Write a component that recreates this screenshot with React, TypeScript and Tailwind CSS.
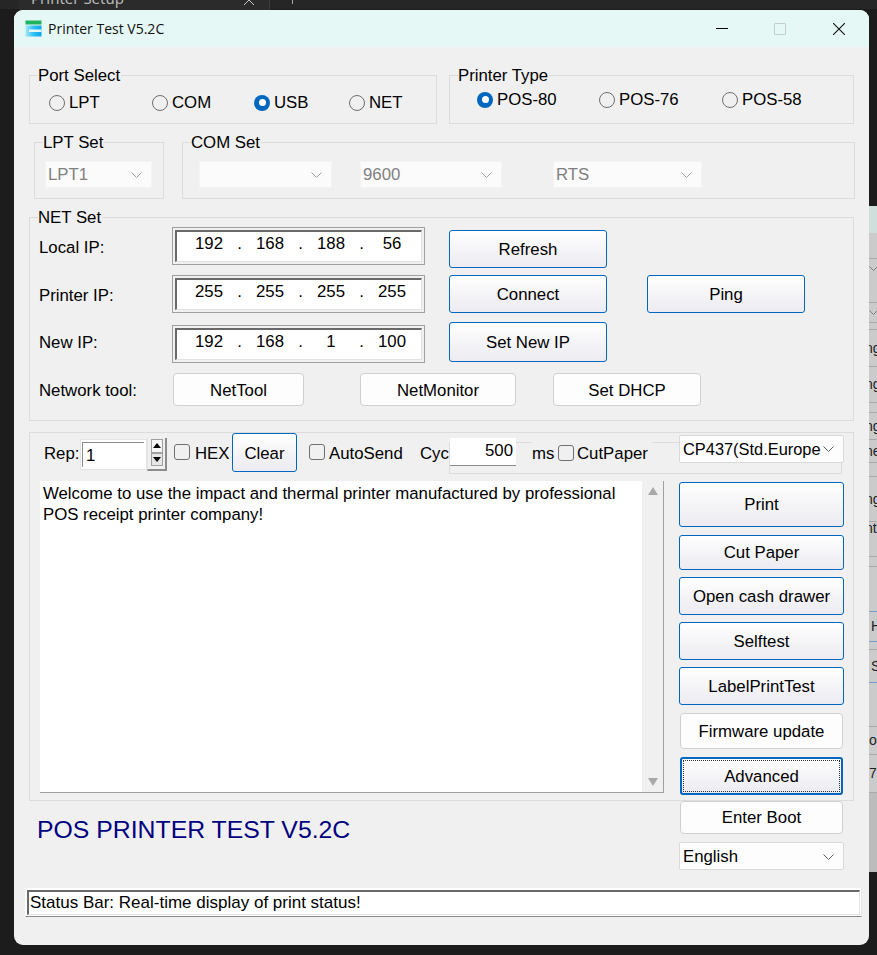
import React from 'react';

const blueBtn =
  'shrink-0 flex items-center justify-center border border-[#0067c0] rounded-[3px] bg-gradient-to-b from-white to-[#ebebf1] text-black';
const plainBtn =
  'shrink-0 flex items-center justify-center border border-[#d0d0d0] rounded-[4px] bg-[#fdfdfd] text-black';

const Chevron = ({ color = '#606060' }: { color?: string }) => (
  <svg width="11" height="6" viewBox="0 0 11 6" fill="none" className="shrink-0">
    <path d="M0.5 0.5 L5.5 5.5 L10.5 0.5" stroke={color} strokeWidth="1" />
  </svg>
);

const Radio = ({ label, checked, className }: { label: string; checked?: boolean; className: string }) => (
  <div className={`flex items-center gap-[4px] shrink-0 ${className}`}>
    {checked ? (
      <span className="w-[16px] h-[16px] rounded-full bg-[#0067c0] flex items-center justify-center">
        <span className="w-[7px] h-[7px] rounded-full bg-white" />
      </span>
    ) : (
      <span className="w-[16px] h-[16px] rounded-full border border-[#6f6f6f]" />
    )}
    <span>{label}</span>
  </div>
);

const Check = ({ className = '' }: { className?: string }) => (
  <span className={`block shrink-0 w-[16px] h-[16px] rounded-[3px] border border-[#6f6f6f] ${className}`} />
);

const Group = ({
  title,
  className,
  children,
}: {
  title: string;
  className: string;
  children?: React.ReactNode;
}) => (
  <div className={`relative shrink-0 border border-[#dcdcdc] ${className}`}>
    <span className="absolute top-[-10px] left-[8px] bg-[#f0f0f0] leading-[20px] pr-[1px]">{title}</span>
    {children}
  </div>
);

const Combo = ({
  value,
  className,
  disabled,
}: {
  value: string;
  className: string;
  disabled?: boolean;
}) => (
  <div
    className={`shrink-0 flex items-center justify-between pr-[9px] ${
      disabled
        ? 'pl-[2px] bg-[#fbfbfb] text-[#808080] border border-[#f4f4f4]'
        : 'pl-[3px] bg-[#fdfdfd] border border-[#d9d9d9] rounded-[2px]'
    } ${className}`}
  >
    <span className="whitespace-nowrap">{value}</span>
    <Chevron color={disabled ? '#a0a0a0' : '#606060'} />
  </div>
);

const IpBox = ({ parts, className = '' }: { parts: string[]; className?: string }) => (
  <div className={`shrink-0 w-[253px] h-[38px] border border-[#a0a0a0] bg-[#f0f0f0] p-[2px] ${className}`}>
    <div className="w-full h-full bg-white border-t-2 border-l-2 border-t-[#696969] border-l-[#696969] border-b border-r border-b-[#e3e3e3] border-r-[#e3e3e3] flex pl-[12px] pt-[2px] leading-[20px]">
      {parts.map((p, i) => (
        <React.Fragment key={i}>
          <span className="w-[40px] text-center">{p}</span>
          {i < 3 && <span className="w-[21px] text-center">.</span>}
        </React.Fragment>
      ))}
    </div>
  </div>
);

// the window that sits behind the dialog, only an 8px strip of it shows
const behindRows: { h: number; text?: string; textCls?: string; line?: string; bg?: string; chevron?: boolean }[] = [
  { h: 27, bg: 'bg-[#cfdfdb]', line: 'border-transparent' },
  { h: 26 },
  { h: 20, chevron: true, line: 'border-transparent' },
  { h: 24 },
  { h: 20, chevron: true },
  { h: 7 },
  { h: 37, text: 'ng', textCls: '-ml-[4px]' },
  { h: 36, text: 'ng', textCls: '-ml-[4px]' },
  { h: 10 },
  { h: 27, text: 'ng', textCls: '-ml-[4px]' },
  { h: 23, text: 'ne', textCls: '-ml-[4px]' },
  { h: 14 },
  { h: 45, text: 'ng', textCls: '-ml-[4px]' },
  { h: 14, text: 'nt', textCls: '-ml-[4px]', line: 'border-transparent' },
  { h: 21 },
  { h: 10 },
  { h: 45, line: 'border-[#7a9cc8]' },
  { h: 30, text: 'H', textCls: 'ml-[2px]', line: 'border-[#7a9cc8]' },
  { h: 8 },
  { h: 33, text: 'S', textCls: 'ml-[2px]', line: 'border-[#7a9cc8]' },
  { h: 44 },
  { h: 28, text: 'or' },
  { h: 38, text: '78' },
  { h: 79, bg: 'bg-[#bcbcbc]', line: 'border-transparent' },
];

export default function App() {
  return (
    <div className="relative w-[877px] h-[955px] overflow-hidden bg-[#1c1c1c] font-['Liberation_Sans',Arial,sans-serif] text-[16.8px] text-black">
      {/* stuff behind the dialog */}
      <div className="absolute left-0 top-0 w-[877px] h-[9px] bg-[#262626]" />
      <div className="absolute left-[19px] top-0 w-[251px] h-[10px] bg-[#2b2b2b] border-r border-[#3c3c3c] overflow-hidden">
        <span className="absolute left-[12px] top-[-13px] text-[#b8b8b8] text-[15px] font-['Noto_Sans',sans-serif] leading-[22px]">
          Printer Setup
        </span>
        <svg width="12" height="6" viewBox="0 0 12 6" className="absolute left-[224px] top-0">
          <path d="M1 -5 L11 5 M11 -5 L1 5" stroke="#c8c8c8" strokeWidth="1" />
        </svg>
      </div>
      <span className="absolute left-[292px] top-0 w-[1px] h-[4px] bg-[#a8a8a8]" />
      <div className="absolute left-[869px] top-[206px] w-[8px] h-[666px] bg-[#cbcbcb] overflow-hidden flex flex-col text-[14px]">
        {behindRows.map((r, i) => (
          <div
            key={i}
            style={{ height: r.h }}
            className={`shrink-0 border-b flex items-center whitespace-nowrap text-[#222] ${r.line ?? 'border-[#a9a9a9]'} ${r.bg ?? ''}`}
          >
            {r.chevron ? (
              <svg width="8" height="5" viewBox="0 0 8 5" fill="none">
                <path d="M0.5 0.5 L4.5 4.5 L8.5 0.5" stroke="#808080" strokeWidth="1" />
              </svg>
            ) : (
              r.text && <span className={`block ${r.textCls ?? ''}`}>{r.text}</span>
            )}
          </div>
        ))}
      </div>

      {/* dialog */}
      <div className="absolute left-[14px] top-[10px] w-[855px] h-[935px] rounded-[9px] overflow-hidden bg-[#f0f0f0] flex flex-col">
        <div className="shrink-0 h-[37px] bg-[#e6f8f6] flex items-center font-['Open_Sans',sans-serif] text-[14px] text-[#111]">
          <svg width="17" height="17" viewBox="0 0 17 17" className="ml-[11px] mt-[-1px] shrink-0">
            <defs>
              <linearGradient id="logoE" x1="0" y1="0" x2="1" y2="0">
                <stop offset="0" stopColor="#a8e8f8" />
                <stop offset="0.5" stopColor="#30c0f2" />
                <stop offset="1" stopColor="#0ca6ee" />
              </linearGradient>
            </defs>
            <rect x="0.5" y="0.5" width="16" height="4" fill="#1fb45c" />
            <rect x="0.5" y="5.5" width="16" height="11" fill="url(#logoE)" />
            <rect x="4" y="9.5" width="12.5" height="2.5" fill="#e6f8f6" />
          </svg>
          <span className="ml-[6px]">Printer Test V5.2C</span>
          <div className="ml-auto flex items-center mr-[24px]">
            <span className="block w-[12px] h-[1px] bg-black" />
            <span className="block ml-[46px] w-[12px] h-[12px] border border-[#c4cfcd] rounded-[1px]" />
            <svg width="12" height="12" viewBox="0 0 12 12" className="ml-[47px]">
              <path d="M0 0 L12 12 M12 0 L0 12" stroke="#111" strokeWidth="1.1" />
            </svg>
          </div>
        </div>

        {/* port + printer type */}
        <div className="flex mt-[28px] ml-[15px] gap-[12px]">
          <Group title="Port Select" className="w-[408px] h-[49px] flex items-center pl-[19px] pt-[6px]">
            <Radio label="LPT" className="w-[103px]" />
            <Radio label="COM" className="w-[102px]" />
            <Radio label="USB" checked className="w-[95px]" />
            <Radio label="NET" className="w-[80px]" />
          </Group>
          <Group title="Printer Type" className="w-[405px] h-[49px] flex items-center pl-[27px]">
            <Radio label="POS-80" checked className="w-[122px]" />
            <Radio label="POS-76" className="w-[123px]" />
            <Radio label="POS-58" className="w-[110px]" />
          </Group>
        </div>

        {/* lpt + com */}
        <div className="flex mt-[18px] ml-[20px] gap-[18px]">
          <Group title="LPT Set" className="w-[130px] h-[57px] pl-[10px] pt-[18px]">
            <Combo value="LPT1" disabled className="w-[107px] h-[27px]" />
          </Group>
          <Group title="COM Set" className="w-[673px] h-[57px] flex pl-[16px] pt-[18px]">
            <Combo value="" disabled className="w-[133px] h-[27px]" />
            <Combo value="9600" disabled className="w-[142px] h-[27px] ml-[28px]" />
            <Combo value="RTS" disabled className="w-[149px] h-[27px] ml-[51px]" />
          </Group>
        </div>

        {/* net */}
        <Group title="NET Set" className="w-[825px] h-[204px] ml-[15px] mt-[18px] pt-[9px] pl-[9px]">
          <div className="flex h-[41px]">
            <span className="w-[133px] h-[38px] flex items-center shrink-0 pt-[4px]">Local IP:</span>
            <IpBox parts={['192', '168', '188', '56']} />
            <button type="button" className={`${blueBtn} w-[158px] h-[38px] ml-[24px] mt-[3px] pt-[2px]`}>
              Refresh
            </button>
          </div>
          <div className="flex mt-[7px] h-[38px]">
            <span className="w-[133px] h-[38px] flex items-center shrink-0 pt-[4px]">Printer IP:</span>
            <IpBox parts={['255', '255', '255', '255']} />
            <button type="button" className={`${blueBtn} w-[158px] h-[38px] ml-[24px] pt-[2px]`}>
              Connect
            </button>
            <button type="button" className={`${blueBtn} w-[158px] h-[38px] ml-[40px] pt-[2px]`}>
              Ping
            </button>
          </div>
          <div className="flex mt-[9px] h-[41px]">
            <span className="w-[133px] h-[38px] mt-[3px] flex items-center shrink-0 pb-[2px]">New IP:</span>
            <IpBox parts={['192', '168', '1', '100']} className="mt-[3px]" />
            <button type="button" className={`${blueBtn} w-[158px] h-[40px] ml-[24px] pt-[2px]`}>
              Set New IP
            </button>
          </div>
          <div className="flex mt-[10px]">
            <span className="w-[134px] h-[33px] flex items-center shrink-0 pt-[2px]">Network tool:</span>
            <button type="button" className={`${plainBtn} w-[131px] h-[33px] pt-[2px]`}>
              NetTool
            </button>
            <button type="button" className={`${plainBtn} w-[156px] h-[33px] ml-[56px] pt-[2px]`}>
              NetMonitor
            </button>
            <button type="button" className={`${plainBtn} w-[148px] h-[33px] ml-[37px] pt-[2px]`}>
              Set DHCP
            </button>
          </div>
        </Group>

        {/* send panel */}
        <div className="shrink-0 w-[825px] h-[369px] ml-[15px] mt-[11px] border border-[#dcdcdc]">
          <div className="relative h-[41px] flex items-start pl-[14px]">
            <div className="absolute left-[419px] top-[9px] w-[393px] h-[32px] border border-[#dcdcdc]" />
            <span className="relative shrink-0 w-[36px] mt-[11px] leading-[20px]">Rep:</span>
            <div className="relative shrink-0 w-[67px] h-[31px] mt-[6px] border border-[#e4e4e4] bg-white p-[2px] pl-[1px]">
              <div className="h-full border-t border-l border-[#8c8c8c] bg-white pl-[3px] leading-[25px]">1</div>
            </div>
            <div className="relative shrink-0 w-[20px] h-[33px] mt-[5px] border-r-2 border-b-2 border-[#8c8c8c] border-l border-l-[#e4e4e4] p-[3px] pr-[2px] pt-[1px] bg-[#f0f0f0] flex flex-col">
              <span className="h-[14px] border border-[#a0a0a0] bg-[#f6f6f6] flex items-center justify-center">
                <svg width="8" height="5" viewBox="0 0 8 5">
                  <path d="M4 0 L8 5 L0 5 Z" fill="#000" />
                </svg>
              </span>
              <span className="h-[14px] border border-[#a0a0a0] bg-[#e6e6e6] flex items-center justify-center">
                <svg width="8" height="5" viewBox="0 0 8 5">
                  <path d="M0 0 L8 0 L4 5 Z" fill="#000" />
                </svg>
              </span>
            </div>
            <Check className="relative ml-[7px] mt-[11px]" />
            <span className="relative shrink-0 ml-[5px] mt-[11px] leading-[20px] w-[37px]">HEX</span>
            <button type="button" className={`${blueBtn} relative w-[65px] h-[39px] pt-[2px]`}>
              Clear
            </button>
            <Check className="relative ml-[12px] mt-[11px]" />
            <span className="relative shrink-0 ml-[4px] mt-[11px] leading-[20px] w-[91px] whitespace-nowrap">AutoSend</span>
            <span className="relative shrink-0 mt-[11px] leading-[20px] w-[30px]">Cyc</span>
            <div className="relative shrink-0 w-[66px] h-[28px] mt-[5px] bg-white border-b border-[#8c8c8c] text-right pr-[3px] leading-[26px]">500</div>
            <div className="relative shrink-0 ml-[16px] mt-[9px] h-[24px] w-[120px] bg-[#f0f0f0] flex items-start pt-[2px]">
              <span className="leading-[20px] w-[26px]">ms</span>
              <Check className="mt-[1px]" />
              <span className="ml-[3px] leading-[20px] whitespace-nowrap">CutPaper</span>
            </div>
            <Combo value="CP437(Std.Europe" className="relative w-[165px] h-[28px] mt-[2px] ml-[27px] text-[16.4px]" />
          </div>

          <div className="flex mt-[7px]">
            <div className="shrink-0 w-[624px] h-[312px] ml-[10px] bg-white border-b border-r border-[#a0a0a0] flex">
              <p className="flex-1 pl-[3px] pt-[2px] pr-[10px] leading-[21px]">
                Welcome to use the impact and thermal printer manufactured by professional POS receipt printer company!
              </p>
              <div className="shrink-0 w-[21px] bg-[#f0f0f0] flex flex-col items-center justify-between py-[6px]">
                <svg width="10" height="8" viewBox="0 0 10 8">
                  <path d="M5 0 L10 8 L0 8 Z" fill="#a8a8a8" />
                </svg>
                <svg width="10" height="8" viewBox="0 0 10 8">
                  <path d="M0 0 L10 0 L5 8 Z" fill="#a8a8a8" />
                </svg>
              </div>
            </div>
            <div className="shrink-0 w-[165px] ml-[15px] mt-[1px] flex flex-col">
              <button type="button" className={`${blueBtn} h-[45px]`}>
                Print
              </button>
              <button type="button" className={`${blueBtn} h-[35px] mt-[8px]`}>
                Cut Paper
              </button>
              <button type="button" className={`${blueBtn} h-[38px] mt-[7px] pt-[2px]`}>
                Open cash drawer
              </button>
              <button type="button" className={`${blueBtn} h-[38px] mt-[7px] pt-[2px]`}>
                Selftest
              </button>
              <button type="button" className={`${blueBtn} h-[38px] mt-[7px] pt-[2px]`}>
                LabelPrintTest
              </button>
              <button type="button" className={`${plainBtn} h-[36px] mt-[8px] mx-[1px] pt-[2px]`}>
                Firmware update
              </button>
              <button type="button" className={`${blueBtn} h-[38px] mt-[8px] mx-[1px] border-2 p-[1px]`}>
                <span className="w-full h-full flex items-center justify-center border border-dotted border-[#333] pt-[2px]">Advanced</span>
              </button>
            </div>
          </div>
        </div>

        {/* heading + bottom right */}
        <div className="flex">
          <span className="shrink-0 w-[665px] pl-[23px] pt-[14px] text-[24.8px] leading-[30px] text-[#000080] whitespace-nowrap">
            POS PRINTER TEST V5.2C
          </span>
          <div className="shrink-0 w-[165px] flex flex-col">
            <button type="button" className={`${plainBtn} h-[33px] mx-[1px]`}>
              Enter Boot
            </button>
            <Combo value="English" className="w-[165px] h-[28px] mt-[8px] pt-[2px]" />
          </div>
        </div>

        {/* status bar */}
        <div className="shrink-0 w-[837px] h-[29px] ml-[11px] mt-[18px] bg-white border-t border-l border-white border-b border-r border-b-[#8c8c8c] border-r-[#e8e8e8] p-[1px] text-[17px]">
          <div className="h-full border-t-2 border-l-2 border-[#696969] border-b border-r border-b-[#e3e3e3] border-r-[#e3e3e3] pl-[1px] leading-[22px] whitespace-nowrap">
            Status Bar: Real-time display of print status!
          </div>
        </div>
      </div>
    </div>
  );
}
